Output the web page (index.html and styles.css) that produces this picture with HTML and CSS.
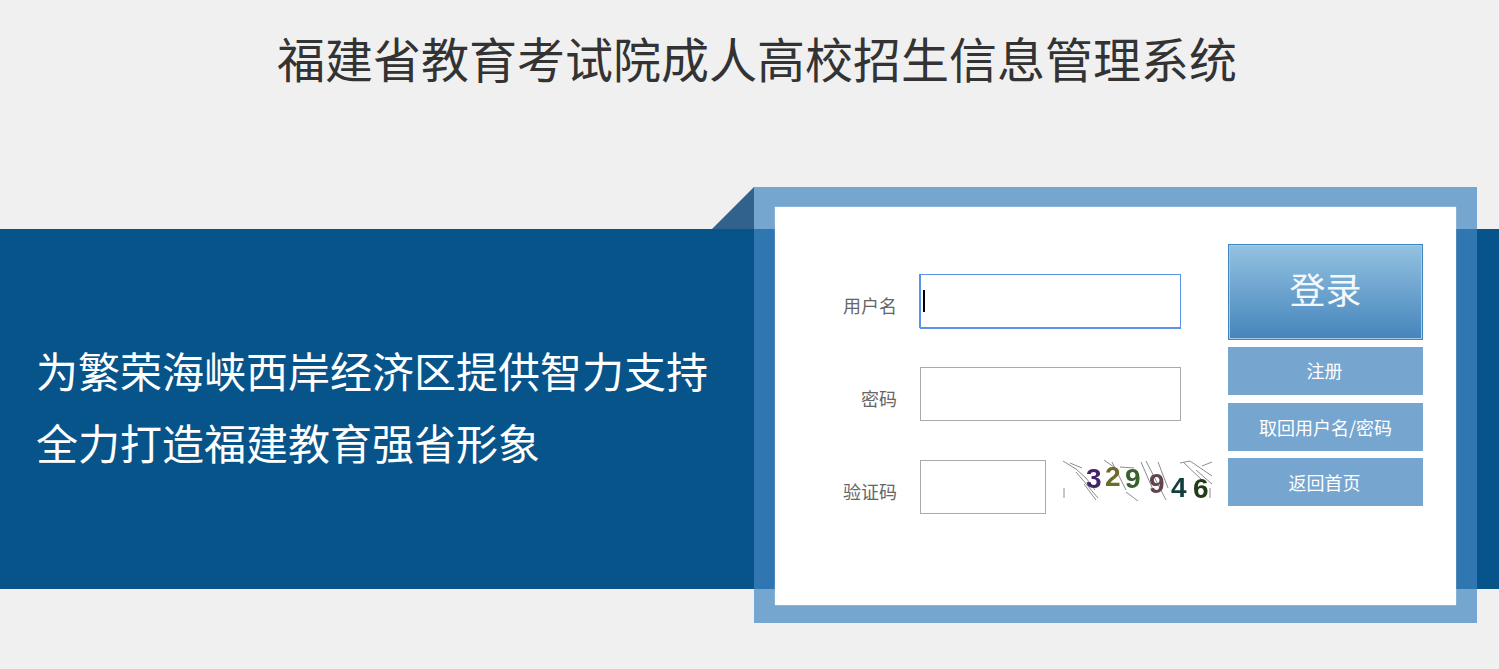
FILE: index.html
```html
<!DOCTYPE html>
<html lang="zh-CN">
<head>
<meta charset="utf-8">
<title>福建省教育考试院成人高校招生信息管理系统</title>
<link rel="stylesheet" href="styles.css">
</head>
<body>
<h1 class="title">福建省教育考试院成人高校招生信息管理系统</h1>
<main class="band">
  <div class="slogan">
    <p>为繁荣海峡西岸经济区提供智力支持</p>
    <p>全力打造福建教育强省形象</p>
  </div>
  <div class="fold"></div>
  <section class="panel">
    <form class="card">
      <div class="fields">
        <div class="row">
          <label class="label" for="user">用户名</label>
          <div class="input-wrap">
            <input id="user" class="input input-focus" type="text">
            <span class="caret"></span>
          </div>
        </div>
        <div class="row">
          <label class="label" for="pass">密码</label>
          <input id="pass" class="input" type="password">
        </div>
        <div class="row">
          <label class="label" for="code">验证码</label>
          <input id="code" class="input input-short" type="text">
          <svg class="captcha" viewBox="0 0 151 54" width="151" height="54" role="img" aria-label="验证码图片">
            <g class="captcha-lines">
              <path d="M1 1 L14 9 L24 18 L33 30"/>
              <path d="M8 3 L20 8"/>
              <path d="M14 12 L36 38"/>
              <path d="M2 28 L2 38"/>
              <path d="M42 0 L56 10"/>
              <path d="M58 7 L72 8"/>
              <path d="M50 2 L64 30"/>
              <path d="M79 2 L92 32"/>
              <path d="M84 1 L104 40"/>
              <path d="M96 2 L106 28"/>
              <path d="M64 32 L76 41"/>
              <path d="M118 3 L128 1 L150 16"/>
              <path d="M122 3 L140 20"/>
              <path d="M140 6 L150 2"/>
              <path d="M134 10 L150 24"/>
              <path d="M148 28 L148 38"/>
              <path d="M22 24 L34 40"/>
            </g>
            <g class="captcha-digits">
              <text class="digit" x="24" y="28" fill="#43246b">3</text>
              <text class="digit" x="43" y="26" fill="#6d6a2c">2</text>
              <text class="digit" x="63" y="28" fill="#3a6030">9</text>
              <text class="digit" x="87" y="33" fill="#62434f">9</text>
              <text class="digit" x="109" y="37" fill="#123f3c">4</text>
              <text class="digit" x="131" y="38" fill="#223c1a">6</text>
            </g>
          </svg>
        </div>
      </div>
      <div class="actions">
        <button class="btn-login" type="button"><span class="btn-login-inner">登录</span></button>
        <a class="btn btn-register" href="#">注册</a>
        <a class="btn btn-recover" href="#">取回用户名/密码</a>
        <a class="btn btn-home" href="#">返回首页</a>
      </div>
    </form>
  </section>
</main>
</body>
</html>
```
FILE: styles.css
```css
* { box-sizing: border-box; }
html, body { margin: 0; height: 669px; overflow: hidden; }
body {
  background: #f0f0f0;
  font-family: "Noto Sans CJK SC", "Liberation Sans", sans-serif;
  color: #333;
}
.title {
  margin: 0;
  padding: 22px 0 0 15px;
  height: 229px;
  font-size: 48px;
  line-height: 70px;
  font-weight: 400;
  text-align: center;
  color: #333;
}
.band {
  position: relative;
  height: 360px;
  background: #07548a;
}
.slogan {
  padding: 105px 0 0 36px;
  font-size: 42px;
  line-height: 72px;
  font-weight: 400;
  color: #fff;
}
.slogan p { margin: 0; white-space: nowrap; }
.fold {
  position: absolute;
  left: 712px;
  top: -42px;
  width: 42px;
  height: 42px;
  background: #31628d;
  clip-path: polygon(100% 0, 100% 100%, 0 100%);
}
.panel {
  position: absolute;
  left: 754px;
  top: -42px;
  width: 723px;
  height: 436px;
  padding: 20px 21px 18px;
  background: rgba(65, 134, 194, 0.707);
}
.card {
  display: flex;
  height: 398px;
  background: #fff;
  box-shadow: 0 0 1px rgba(255, 255, 255, 0.8);
}
.fields {
  display: flex;
  flex-direction: column;
  gap: 39px;
  width: 453px;
  padding-top: 67px;
}
.row {
  display: flex;
  align-items: flex-start;
  height: 54px;
}
.label {
  width: 122px;
  margin-right: 23px;
  padding-top: 17px;
  font-size: 18px;
  line-height: 28px;
  text-align: right;
  color: #666;
  flex: none;
}
.input-wrap { position: relative; flex: none; }
.input {
  display: block;
  width: 261px;
  height: 54px;
  padding: 0 4px;
  border: 1px solid #aaa;
  border-radius: 0;
  background: #fff;
  outline: none;
  flex: none;
}
.input-focus { border-color: #5b93e8; box-shadow: -1px 0 0 #5b93e8, 0 1px 0 #5b93e8; }
.caret {
  position: absolute;
  left: 3px;
  top: 16px;
  width: 2px;
  height: 22px;
  background: #000;
}
.input-short { width: 126px; }
.captcha { margin-left: 16px; flex: none; display: block; }
.captcha-lines { filter: blur(0.35px); }
.captcha-lines path {
  fill: none;
  stroke: #8c8c8c;
  stroke-width: 1;
}
.captcha-digits { filter: blur(0.4px); }
.digit {
  font-family: "Liberation Sans", sans-serif;
  font-size: 28px;
  font-weight: 700;
}
.actions {
  display: flex;
  flex-direction: column;
  width: 195px;
  padding-top: 37px;
}
.btn-login {
  display: block;
  width: 195px;
  height: 96px;
  padding: 0;
  margin-bottom: 7px;
  border: 1px solid #3f85bd;
  background: #3f85bd;
  cursor: pointer;
  font-family: inherit;
}
.btn-login-inner {
  display: block;
  height: 94px;
  border: 1px solid #a8cbe3;
  background: linear-gradient(#93c1e0, #4585bc);
  font-size: 36px;
  line-height: 85px;
  color: #f4f8fb;
  font-weight: 400;
}
.btn {
  display: block;
  height: 48px;
  background: #76a6d0;
  font-size: 18px;
  line-height: 46px;
  text-align: center;
  text-indent: -2px;
  color: #fff;
  text-decoration: none;
}
.btn-register { margin-bottom: 8px; }
.btn-recover { margin-bottom: 7px; line-height: 48px; text-indent: 0; }
.btn-home { line-height: 48px; }
```
